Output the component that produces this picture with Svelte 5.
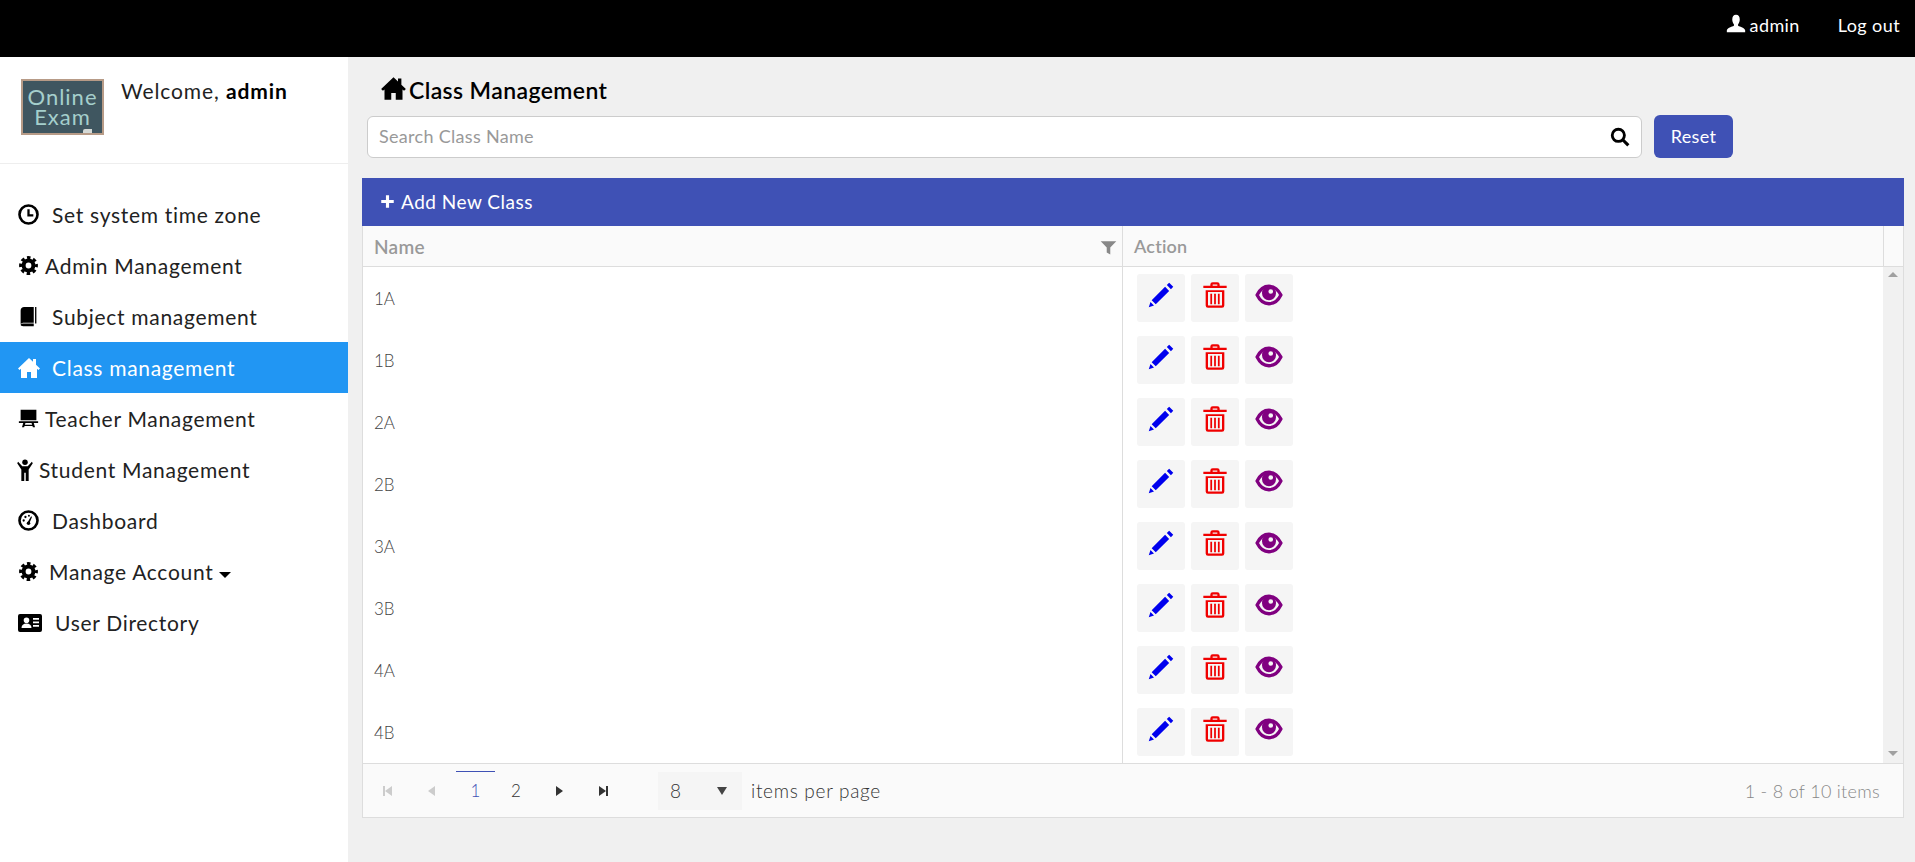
<script>
  const nav = [
    { label: "Set system time zone", icon: "clock", gap: 13 },
    { label: "Admin Management", icon: "cog", gap: 6 },
    { label: "Subject management", icon: "book", gap: 13 },
    { label: "Class management", icon: "home", gap: 11, active: true },
    { label: "Teacher Management", icon: "teacher", gap: 6 },
    { label: "Student Management", icon: "student", gap: 3, narrow: true },
    { label: "Dashboard", icon: "gauge", gap: 13 },
    { label: "Manage Account", icon: "cog", gap: 10, caret: true },
    { label: "User Directory", icon: "card", gap: 13, wide: true },
  ];
  const rows = ["1A", "1B", "2A", "2B", "3A", "3B", "4A", "4B"];
</script>

{#snippet icon(name)}
  <svg viewBox="0 0 24 24" fill="currentColor" aria-hidden="true">
    {#if name === "clock"}
      <circle cx="12" cy="12" r="10.300" fill="none" stroke="currentColor" stroke-width="3" />
      <path d="M12 6v7h5.500" fill="none" stroke="currentColor" stroke-width="2.600" />
    {:else if name === "cog"}
      <circle cx="12" cy="12" r="5.600" fill="none" stroke="currentColor" stroke-width="4.600" />
      <circle cx="12" cy="12" r="9" fill="none" stroke="currentColor" stroke-width="3.500" stroke-dasharray="4 3.070" stroke-dashoffset="2" />
    {:else if name === "book"}
      <path d="M7 1h11v18H7c-1.500 0-3 .5-4 1.500V5c0-2.500 1.700-4 4-4zM3 21.500c0-1 2-1.500 4-1.500h11v3H6c-2 0-3-.5-3-1.500zM19.500 1H21v19h-1.500z" />
    {:else if name === "home"}
      <path d="M12 2 1 12.500 2.600 14 4 12.800V22h6v-6h4v6h6v-9.200l1.400 1.200 1.600-1.500L19 8.700V3h-3v2.800z" />
    {:else if name === "teacher"}
      <path d="M3 2h18v12H3zM1 15h22v2H1zM6 17h2.500L7 22H4.500zM15.500 17H18l1.500 5H17zM7.500 19h9v1.500h-9z" />
    {:else if name === "student"}
      <circle cx="12" cy="3.500" r="3" />
      <path d="M4.500 3 9 8h6l4.500-5 1 1.500L16 11.500V24h-3.200v-9h-1.600v9H8V11.500L3.500 4.500z" />
    {:else if name === "gauge"}
      <circle cx="12" cy="12" r="10.300" fill="none" stroke="currentColor" stroke-width="3" />
      <path d="m11 14 4-7 1 1-3 7z" />
      <circle cx="6.500" cy="12" r="1.300" /><circle cx="8.500" cy="8" r="1.300" /><circle cx="12.500" cy="6.500" r="1.100" /><circle cx="12" cy="15" r="2" />
    {:else if name === "card"}
      <path fill-rule="evenodd" d="M2 3h20a2 2 0 0 1 2 2v14a2 2 0 0 1-2 2H2a2 2 0 0 1-2-2V5a2 2 0 0 1 2-2zm6.500 3.500a2.800 2.800 0 1 0 0 5.600 2.800 2.800 0 0 0 0-5.600zM3.500 17h10c0-3-2-4.500-5-4.500s-5 1.500-5 4.500zM15 7v1.800h6V7zm0 3.500v1.800h6v-1.800zm0 3.500v1.800h6V14z" />
    {:else if name === "user"}
      <path d="M12 1c3 0 4.500 2.200 4.500 5.500 0 2.500-1 4.500-2 5.800v1.700c2.500 1.200 8 2.500 8.500 5.500V22H1v-2.500c.5-3 6-4.300 8.500-5.500v-1.700c-1-1.300-2-3.300-2-5.800C7.500 3.200 9 1 12 1z" />
    {:else if name === "search"}
      <circle cx="10" cy="10" r="7.300" fill="none" stroke="currentColor" stroke-width="3.400" />
      <path d="m15 15 7 7" fill="none" stroke="currentColor" stroke-width="3.800" />
    {:else if name === "plus"}
      <path d="M9.500 2h5v7.500H22v5h-7.500V22h-5v-7.500H2v-5h7.500z" />
    {:else if name === "filter"}
      <path d="M1 3h22l-8.500 9v10l-5-3v-7z" />
    {:else if name === "pencil"}
      <path d="m19 1.500 3.500 3.500-2 2L17 3.500zM15.500 5l3.500 3.500L7.500 20 4 16.500zM3 18l3 3-4.500 1.500z" />
    {:else if name === "trash"}
      <path fill-rule="evenodd" d="M8 3a2 2 0 0 1 2-2h4a2 2 0 0 1 2 2v1h6v2H2V4h6zm2 1h4V3h-4zM4 8h16v13a2 2 0 0 1-2 2H6a2 2 0 0 1-2-2zm2 1.500v11c0 .3.200.5.500.5h11c.3 0 .5-.2.500-.5v-11zm2 1.500h1.500v9H8zm3.250 0h1.500v9h-1.500zm3.250 0H16v9h-1.500z" />
    {:else if name === "eye"}
      <path d="M1.800 12C4 7.500 7.500 4.500 12 4.500s8 3 10.200 7.500C20 16.500 16.500 19.500 12 19.500S4 16.500 1.800 12z" fill="none" stroke="currentColor" stroke-width="2.800" />
      <path fill-rule="evenodd" d="M12 4.500a6 6 0 1 1 0 12 6 6 0 0 1 0-12zm1.500 2.500a2 2 0 1 0 0 4 2 2 0 0 0 0-4z" />
    {/if}
  </svg>
{/snippet}

<div class="page">
  <header class="topbar">
    <span class="ic user">{@render icon("user")}</span>
    <span class="who">admin</span>
    <span class="logout">Log out</span>
  </header>

  <div class="layout">
    <aside class="sidebar">
      <div class="profile">
        <div class="logo">
          <span>Online</span>
          <span>Exam</span>
        </div>
        <div class="welcome">Welcome, <b>admin</b></div>
      </div>
      <ul class="menu">
        {#each nav as item}
          <li class:active={item.active}>
            <span class="ic" class:narrow={item.narrow} class:wide={item.wide} style="margin-right: {item.gap}px">{@render icon(item.icon)}</span>
            {item.label}
            {#if item.caret}<i class="caret"></i>{/if}
          </li>
        {/each}
      </ul>
    </aside>

    <main class="content">
      <h1 class="title"><span class="ic">{@render icon("home")}</span>Class Management</h1>
      <div class="search-row">
        <div class="search">
          <span class="placeholder">Search Class Name</span>
          <span class="ic">{@render icon("search")}</span>
        </div>
        <button class="reset">Reset</button>
      </div>

      <div class="toolbar"><span class="ic">{@render icon("plus")}</span>Add New Class</div>

      <div class="grid">
        <div class="grid-head">
          <div class="col-name">Name <span class="ic">{@render icon("filter")}</span></div>
          <div class="col-action">Action</div>
          <div class="col-scroll"></div>
        </div>
        <div class="grid-body">
          <div class="rows">
            {#each rows as name}
              <div class="row">
                <div class="col-name">{name}</div>
                <div class="col-action">
                  <button class="act edit"><span class="ic">{@render icon("pencil")}</span></button>
                  <button class="act del"><span class="ic">{@render icon("trash")}</span></button>
                  <button class="act view"><span class="ic">{@render icon("eye")}</span></button>
                </div>
              </div>
            {/each}
          </div>
          <div class="scrollbar">
            <i class="up"></i>
            <i class="down"></i>
          </div>
        </div>
        <div class="pager">
          <span class="pg off"><i class="bar"></i><i class="tri left"></i></span>
          <span class="pg off"><i class="tri left"></i></span>
          <span class="pg num current">1</span>
          <span class="pg num">2</span>
          <span class="pg"><i class="tri right"></i></span>
          <span class="pg"><i class="tri right"></i><i class="bar"></i></span>
          <div class="size">8 <i class="tri down-tri"></i></div>
          <span class="per">items per page</span>
          <span class="info">1 - 8 of 10 items</span>
        </div>
      </div>
    </main>
  </div>
</div>

<style>
  :global(body) { background: #f0f0f0; }
  .page { font-family: Lato, "Open Sans", sans-serif; height: 862px; display: flex; flex-direction: column; overflow: hidden; color: #222; }
  .ic { display: inline-flex; flex: none; }
  .ic svg { width: 100%; height: 100%; display: block; }

  .topbar { height: 57px; box-sizing: border-box; background: #000; color: #fff; display: flex; align-items: center; justify-content: flex-end; font-size: 18px; letter-spacing: .4px; padding: 0 15px 8px 0; }
  .topbar .user { width: 20px; height: 20px; margin-right: 4px; margin-top: -2px; }
  .who { margin-right: 38px; }

  .layout { flex: 1; display: flex; min-height: 0; }
  .sidebar { width: 348px; background: #fff; flex: none; }
  .profile { height: 107px; display: flex; border-bottom: 1px solid #eee; padding: 22px 0 0 21px; box-sizing: border-box; }
  .logo { position: relative; width: 83px; height: 56px; box-sizing: border-box; background: #3f5660; border: 2px solid #b79b87; color: #a5cfcc; font-size: 22px; letter-spacing: 1px; line-height: 20px; text-align: center; display: flex; flex-direction: column; padding-top: 6px; overflow: hidden; }
  .logo::after { content: ""; position: absolute; right: 10px; bottom: 0; width: 9px; height: 4px; background: #d5d9d6; border-radius: 2px 0 0 0; }
  .welcome { margin-left: 17px; font-size: 21px; letter-spacing: .9px; line-height: 24px; }
  .welcome b { font-weight: 700; color: #000; }

  .menu { list-style: none; margin: 25px 0 0; padding: 0; }
  .menu li { height: 51px; display: flex; align-items: center; padding-left: 18px; font-size: 21px; letter-spacing: .7px; color: #222; }
  .menu .ic { width: 21px; height: 21px; color: #000; }
  .menu .ic.narrow { width: 22px; height: 22px; margin-left: -4px; }
  .menu .ic.wide { width: 24px; height: 24px; }
  .menu li.active { background: #2196f3; color: #fff; }
  .menu li.active .ic { color: #fff; width: 24px; height: 24px; margin-left: -1px; }
  .caret { width: 0; height: 0; border: 6px solid transparent; border-top-color: #000; border-bottom: 0; margin: 6px 0 0 6px; }

  .content { flex: 1; min-width: 0; padding: 0 11px 0 14px; }
  .title { margin: 18px 0 0 18px; height: 30px; display: flex; align-items: center; font-size: 23px; letter-spacing: .4px; font-weight: 600; color: #000; }
  .title .ic { width: 27px; height: 27px; margin-right: 2px; margin-top: -4px; }
  .search-row { display: flex; gap: 12px; margin: 10px 0 0 5px; align-items: center; }
  .search { width: 1275px; height: 42px; box-sizing: border-box; background: #fff; border: 1px solid #ccc; border-radius: 6px; display: flex; align-items: center; justify-content: space-between; padding: 0 11px; font-size: 18px; letter-spacing: .3px; color: #999; }
  .search .placeholder { margin-top: -2px; }
  .search .ic { width: 20px; height: 20px; color: #000; }
  .reset { width: 79px; height: 43px; background: #3f51b5; border: 0; border-radius: 6px; color: #fff; font: inherit; font-size: 18px; letter-spacing: .3px; padding: 0 0 2px; }

  .toolbar { margin-top: 20px; height: 48px; box-sizing: border-box; background: #3f51b5; color: #fff; display: flex; align-items: center; padding: 0 0 2px 18px; font-size: 19px; letter-spacing: .5px; }
  .toolbar .ic { width: 15px; height: 15px; margin-right: 6px; }

  .grid { background: #fff; border: 1px solid #ddd; border-top: 0; }
  .grid-head { display: flex; height: 41px; background: #fafafa; border-bottom: 1px solid #ddd; box-sizing: border-box; color: #999; font-size: 18px; font-weight: 600; letter-spacing: .2px; }
  .grid-head .col-name { display: flex; align-items: center; justify-content: space-between; padding-right: 5px; font-size: 19px; letter-spacing: .3px; }
  .grid-head .ic { width: 17px; height: 17px; color: #888; margin-top: 3px; }
  .grid-head .col-action { display: flex; align-items: center; flex: 1; padding-left: 11px; border-left: 1px solid #ddd; }
  .col-scroll { width: 19px; border-left: 1px solid #ddd; }
  .col-name { width: 759px; box-sizing: border-box; padding-left: 11px; }

  .grid-body { display: flex; height: 496px; }
  .rows { flex: 1; }
  .row { display: flex; height: 62px; align-items: center; color: #444; font-size: 17px; font-weight: 300; }
  .row .col-action { flex: 1; height: 100%; display: flex; align-items: flex-start; gap: 6px; padding: 7px 0 0 14px; border-left: 1px solid #ddd; box-sizing: border-box; }
  .act { width: 48px; height: 48px; border: 0; border-radius: 3px; background: #f5f5f5; padding: 0; display: flex; justify-content: center; padding-top: 7px; }
  .act .ic { width: 28px; height: 28px; }
  .edit { color: #0000ee; }
  .del { color: #f00000; }
  .view { color: #800080; }

  .scrollbar { width: 20px; background: #f1f1f1; position: relative; }
  .scrollbar i { position: absolute; left: 5px; width: 0; height: 0; border: 5px solid transparent; }
  .up { top: 5px; border-bottom-color: #a0a0a0 !important; border-top: 0 !important; }
  .down { bottom: 7px; border-top-color: #a0a0a0 !important; border-bottom: 0 !important; }

  .pager { height: 54px; background: #fafafa; border-top: 1px solid #ddd; box-sizing: border-box; display: flex; align-items: center; padding: 0 23px 0 2px; color: #333; font-size: 17px; }
  .pg { width: 44px; height: 38px; display: flex; align-items: center; justify-content: center; color: #333; }
  .pg.num { width: 42px; font-size: 17px; font-weight: 300; }
  .pg.off { color: #ccc; }
  .pg.current { width: 39px; margin-left: 3px; color: #3f51b5; border-top: 1px solid #3f51b5; box-sizing: border-box; margin-top: -1px; }
  .tri { width: 0; height: 0; border: 5px solid transparent; }
  .tri.left { border-right: 7px solid currentColor; border-left: 0; }
  .tri.right { border-left: 7px solid currentColor; border-right: 0; }
  .bar { width: 2px; height: 10px; background: currentColor; }
  .size { width: 84px; height: 38px; box-sizing: border-box; background: #f5f5f5; margin-left: 33px; display: flex; align-items: center; justify-content: space-between; padding: 0 15px 0 12px; font-size: 19px; font-weight: 300; }
  .down-tri { border-top: 8px solid #444; border-bottom: 0; border-left-width: 5px; border-right-width: 5px; }
  .per { margin-left: 9px; font-size: 19px; letter-spacing: .7px; font-weight: 300; }
  .info { margin-left: auto; color: #888; font-size: 18px; letter-spacing: .3px; font-weight: 300; }
</style>
